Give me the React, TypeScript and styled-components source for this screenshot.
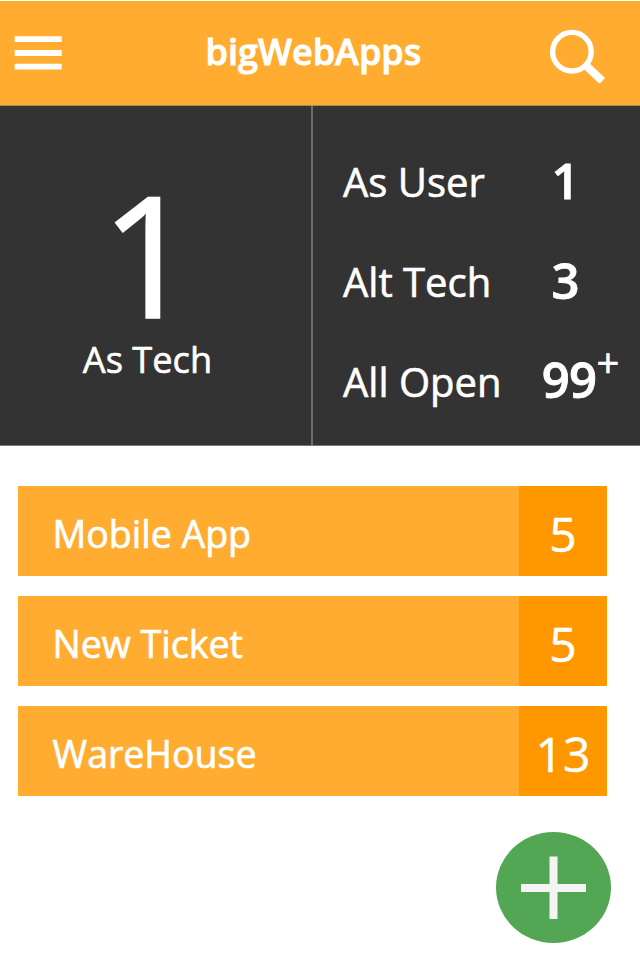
import React from "react";
import styled, { createGlobalStyle } from "styled-components";

const Global = createGlobalStyle`
  * { box-sizing: border-box; }
  body { margin: 0; background: #fff; font-family: "Open Sans", "Noto Sans", sans-serif; color: #fff; }
`;
const Page = styled.main`
  width: 640px; height: 960px; overflow: hidden; display: flex; flex-direction: column; background: #fff;
`;
const Header = styled.header`
  height: 106px; padding: 0 34px 0 14px; background: #ffac30;
  border-top: 1px solid #fff; border-bottom: 1px solid #a78b60;
  display: grid; grid-template-columns: 60px 1fr 60px; align-items: center;
`;
const Title = styled.h1`
  margin: 0; font-size: 36px; line-height: 50px; font-weight: 600; white-space: nowrap;
  padding: 0 0 3px 131.5px; -webkit-text-stroke: 0.9px #fff;
`;
const IconButton = styled.button`
  border: 0; padding: 0; background: none; color: inherit; display: flex;
`;
const Summary = styled.section`
  height: 340px; background: #333; border-bottom: 1px solid #777; display: grid; grid-template-columns: 313px 1fr;
`;
const Primary = styled.div`
  border-right: 2px solid #6c6c6c; padding: 72px 16px 0 0; display: flex; flex-direction: column; align-items: center;
`;
const BigCount = styled.div`
  padding-left: 2px; font-size: 168px; line-height: 150px; -webkit-text-stroke: 1.5px #fff;
`;
const PrimaryLabel = styled.div`
  margin-top: 6px; font-size: 36.2px; line-height: 50px; -webkit-text-stroke: 0.6px #fff;
`;
const Stats = styled.div`
  padding: 25px 0 0 30px; display: grid; grid-auto-rows: 100px; align-content: start;
`;
const Stat = styled.div`
  display: grid; grid-template-columns: 190px 64px 30px; align-items: center; font-size: 40px;
  -webkit-text-stroke: 0.6px #fff;
`;
const StatValue = styled.strong<{ $capped: boolean }>`
  font-size: 49px; line-height: 60px; font-weight: 600; text-align: center; -webkit-text-stroke: 0.8px #fff;
  letter-spacing: ${(p) => (p.$capped ? "-0.8px" : "0")};
  padding: ${(p) => (p.$capped ? "0 0 5px 8px" : "0 0 2px 1px")};
`;
const More = styled.span`
  font-size: 40px; line-height: 50px; padding-bottom: 36px; margin-left: -0.5px;
`;
const List = styled.section`
  padding: 40px 33px 0 18px; display: flex; flex-direction: column; gap: 20px;
`;
const Row = styled.div`
  height: 90px; display: grid; grid-template-columns: 1fr 88px; background: #ffac30;
`;
const RowName = styled.div`
  padding: 5px 0 0 34.5px; display: flex; align-items: center;
  font-size: 37.5px; line-height: 50px; -webkit-text-stroke: 0.7px #fff;
`;
const RowCount = styled.div`
  background: #ff9800; display: flex; align-items: center; justify-content: center; padding-top: 5px;
  font-size: 48px; line-height: 60px; -webkit-text-stroke: 0.5px #fff;
`;
const AddButton = styled.button`
  align-self: flex-end; flex-shrink: 0; margin: 36px 29px 0 0; width: 115px; height: 111px; border: 0; padding: 0;
  border-radius: 50%; background: #53a653; display: flex; align-items: center; justify-content: center;
`;

const stats = [
  { label: "As User", value: "1", capped: false },
  { label: "Alt Tech", value: "3", capped: false },
  { label: "All Open", value: "99", capped: true },
];
const projects = [
  { name: "Mobile App", count: 5 },
  { name: "New Ticket", count: 5 },
  { name: "WareHouse", count: 13 },
];

export default function App() {
  return (
    <Page>
      <Global />
      <Header>
        <IconButton aria-label="Menu">
          <svg width="48" height="36" viewBox="0 0 48 36" stroke="#fff" strokeWidth="5.8">
            <path d="M.7 4.2H47.7M.7 18H47.7M.7 31.7H47.7" />
          </svg>
        </IconButton>
        <Title>bigWebApps</Title>
        <IconButton aria-label="Search">
          <svg width="60" height="60" viewBox="0 0 60 60" fill="none" stroke="#fff">
            <circle cx="25.9" cy="28.7" r="19.3" strokeWidth="5.4" />
            <path d="M39.5 42L56.3 58" strokeWidth="8" />
          </svg>
        </IconButton>
      </Header>
      <Summary>
        <Primary>
          <BigCount>1</BigCount>
          <PrimaryLabel>As Tech</PrimaryLabel>
        </Primary>
        <Stats>
          {stats.map((s) => (
            <Stat key={s.label}>
              <span>{s.label}</span>
              <StatValue $capped={s.capped}>{s.value}</StatValue>
              {s.capped && <More>+</More>}
            </Stat>
          ))}
        </Stats>
      </Summary>
      <List>
        {projects.map((p) => (
          <Row key={p.name}>
            <RowName>{p.name}</RowName>
            <RowCount>{p.count}</RowCount>
          </Row>
        ))}
      </List>
      <AddButton aria-label="Add">
        <svg width="66" height="64" viewBox="0 0 66 64" stroke="#f4f4f4" strokeWidth="8">
          <path d="M0 32H65M32.5 0.5V63" />
        </svg>
      </AddButton>
    </Page>
  );
}
